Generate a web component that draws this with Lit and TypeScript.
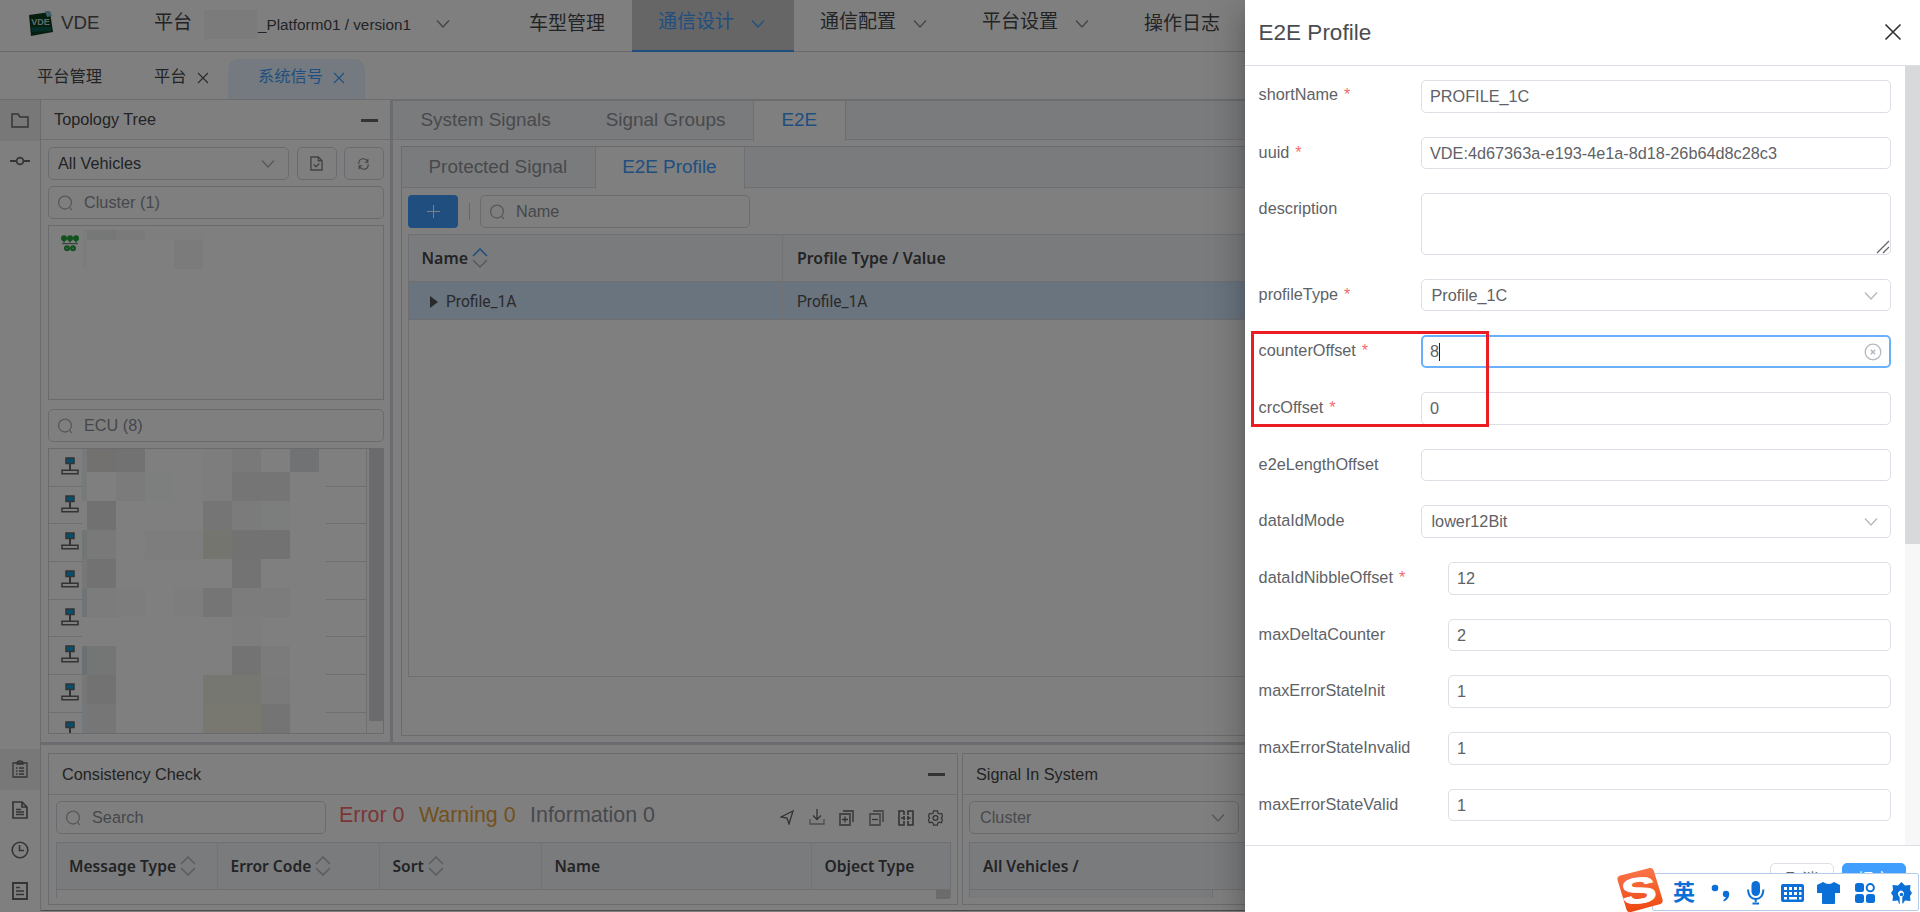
import { LitElement, html, svg, css, nothing } from "lit";
import { customElement } from "lit/decorators.js";
import { styleMap } from "lit/directives/style-map.js";

const icon = (body: unknown, w: number, h: number, vb = `0 0 ${w} ${h}`) =>
  html`<svg class="ic" width=${w} height=${h} viewBox=${vb} fill="none" stroke="currentColor" stroke-width="1.3">${body}</svg>`;

const chevron = () => icon(svg`<path d="M1 1.5 7 8 13 1.5"/>`, 14, 10);
const search = () => icon(svg`<circle cx="8" cy="7.6" r="6.4"/><path d="m12.6 12.4 2.4 2.800"/>`, 16, 17);
const cross = (s: number) => icon(svg`<path d="M1 1 11 11M11 1 1 11" stroke-width="1.100"/>`, s, s, "0 0 12 12");
const sorter = (up = false) => html`<svg class="ic sorter" width="16" height="20" viewBox="0 0 16 20" fill="none" stroke-width="1.6">
  <path class=${up ? "on" : "off"} d="M1 8 8 1l7 7"/><path class="off" d="m1 12 7 7 7-7"/></svg>`;
const minus = () => html`<span class="minus"></span>`;

const railTop = {
  folder: icon(svg`<path stroke-width="1.5" d="M1 1h6l2 3h8v10H1z"/>`, 18, 15),
  commit: icon(svg`<circle cx="10" cy="5" r="3.4" stroke-width="1.8"/><path stroke-width="1.8" d="M0 5h6.5M13.5 5H20"/>`, 20, 10),
};
const railBottom = [
  icon(svg`<path d="M1 3h14v14H1zM5 3c0-1 1-2 3-2s3 1 3 2v1H5zM4 8h1.5M7 8h5M4 11h1.500M7 11h5M4 14h1.500M7 14h5"/>`, 16, 18),
  icon(svg`<path stroke-width="1.7" d="M1 1h9l5 5v11H1zM10 1v5h5M4 8.500h5M4 11h8M4 13.500h8"/>`, 16, 18),
  icon(svg`<circle cx="9" cy="9" r="7.800" stroke-width="1.600"/><path stroke-width="1.600" d="M8.500 4v5.500H13"/>`, 18, 18),
  icon(svg`<path stroke-width="1.900" d="M1 1h14v16H1z"/><path stroke-width="1.500" d="M4 5.500h4M4 9h8M4 12.500h8"/>`, 16, 18),
];

const clusterIcon = html`<svg class="ic" width="18" height="17" viewBox="0 0 18 17">
  <g fill="#22a43c"><circle cx="3" cy="3.200" r="3"/><circle cx="9" cy="3.200" r="3"/><circle cx="15" cy="3.200" r="3"/>
  <path d="M2.200 5h1.600v2.500H2.200zM8.200 5h1.600v2.500H8.200zM14.200 5h1.600v2.500h-1.600z"/>
  <circle cx="6" cy="13.200" r="3"/><circle cx="12" cy="13.200" r="3"/></g>
  <path d="M1 8.700h16" stroke="#666" stroke-width="1"/><path d="M5 13.200h2M11 13.200h2" stroke="#bbe" stroke-width="1"/></svg>`;
const ecuIcon = html`<svg class="ic" width="18" height="18" viewBox="0 0 18 18" fill="none" stroke="#666" stroke-width="1.500">
  <path d="M5 1h8v5.500H5z" fill="#0a9fdc"/><path d="M9 7v6" stroke-width="2"/><path d="M1 13.200h16v3.600H1z"/></svg>`;

const toolIcons = [
  icon(svg`<path d="M1 7 13 1 9 14 7 8z"/>`, 14, 15),
  icon(svg`<path stroke="#999" d="M1 10v5h14v-5"/><path d="M8 0v10M4 6.500l4 4 4-4"/>`, 16, 17),
  icon(svg`<path stroke="#888" stroke-width="1.800" d="M1 4h10v11H1zM4 1h10v11"/><path d="M3 9.500h6M6 6.500v6"/>`, 15, 16),
  icon(svg`<path stroke="#999" stroke-width="1.800" d="M1 4h10v11H1zM4 1h10v11"/><path d="M3 9.500h6"/>`, 15, 16),
  icon(svg`<path stroke-width="1.600" d="M6 1H1v14h5v-4M6 5V1M10 5V1h5v14h-5v-4M3 8h4M9 8h4M6 6v4M10 6v4"/>`, 16, 16),
  icon(svg`<path d="M6 1h4l.6 2.200 1.700 1 2.200-.6 1 3.200-1.400 1.700 1.400 2-1.200 3-2.200-.500-1.700 1L10 16H6l-.6-2-1.700-1-2.200.5-1.200-3 1.400-2L.500 6.800l1-3.200 2.200.6 1.700-1z"/><circle cx="8" cy="8.500" r="2.600"/>`, 15, 16, "0 0 16 17"),
];

interface Cell { x: number; y: number; w: number; h: number; c: string }
const m = (x: number, y: number, w: number, h: number, c: string): Cell => ({ x, y, w, h, c });
const clusterBlur = [
  m(0, 0, 4, 39, "#f6f8f8"), m(4, 0, 29, 10, "#ecefee"), m(33, 0, 29, 10, "#f4f5f4"),
  m(62, 0, 58, 10, "#fafcfb"), m(91, 10, 29, 29, "#f6f6f6"),
];
const ecuBlur = [
  m(0, 0, 5, 23, "#eff5f5"), m(5, 0, 58, 23, "#e4e3df"), m(34, 0, 29, 23, "#e4e4e4"), m(121, 0, 29, 23, "#fafafa"),
  m(150, 0, 29, 23, "#f3f3f3"), m(208, 0, 29, 23, "#e2e4e8"),
  m(0, 23, 5, 29, "#eef5f4"), m(34, 23, 29, 29, "#f4f7f5"), m(63, 23, 29, 29, "#fafdfc"), m(121, 23, 29, 29, "#fafafa"), m(150, 23, 58, 29, "#ebebeb"),
  m(5, 52, 29, 29, "#e0e3e1"), m(121, 52, 29, 29, "#ebebeb"), m(150, 52, 29, 29, "#f7f7f7"), m(179, 52, 29, 29, "#f8fbfa"),
  m(0, 81, 5, 29, "#e5eaed"), m(5, 81, 29, 29, "#f3f3f3"), m(63, 81, 58, 29, "#fbfbfb"), m(121, 81, 29, 29, "#ebebdf"), m(150, 81, 58, 29, "#e4e4e4"),
  m(0, 110, 5, 29, "#eeeeee"), m(5, 110, 29, 29, "#e4e4e4"), m(150, 110, 29, 29, "#e6e6e6"),
  m(0, 139, 5, 29, "#dfe8ec"), m(5, 139, 29, 29, "#f8f8f8"), m(34, 139, 29, 29, "#fbfbfb"), m(92, 139, 29, 29, "#fafafa"), m(121, 139, 29, 29, "#ebebeb"), m(150, 139, 58, 29, "#f9f9f9"),
  m(150, 168, 29, 29, "#fafafa"),
  m(0, 197, 5, 29, "#d4e0e6"), m(5, 197, 29, 29, "#e9edeb"), m(150, 197, 29, 29, "#e6e6e6"), m(179, 197, 29, 29, "#f7f7f7"),
  m(0, 226, 5, 29, "#eeeeee"), m(5, 226, 29, 29, "#e5e5e5"), m(121, 226, 58, 29, "#eeeee2"), m(179, 226, 29, 29, "#f4f4f4"),
  m(0, 255, 5, 29, "#e8f1f4"), m(5, 255, 29, 29, "#ececec"), m(121, 255, 58, 29, "#f0f0e3"), m(179, 255, 29, 29, "#e8e8e8"),
  m(5, 284, 29, 6, "#f5f7f6"), m(34, 284, 116, 6, "#fafcfb"), m(150, 284, 29, 6, "#f3f5f4"), m(208, 284, 35, 6, "#f9f9f9"),
];
const mosaic = (cells: Cell[]) => cells.map((k) => html`<i class="cell" style=${styleMap({
  left: `${k.x}px`, top: `${k.y}px`, width: `${k.w}px`, height: `${k.h}px`, background: k.c })}></i>`);

type Kind = "text" | "area" | "select" | "focus";
const fields: [string, boolean, Kind, string, boolean][] = [
  ["shortName", true, "text", "PROFILE_1C", false],
  ["uuid", true, "text", "VDE:4d67363a-e193-4e1a-8d18-26b64d8c28c3", false],
  ["description", false, "area", "", false],
  ["profileType", true, "select", "Profile_1C", false],
  ["counterOffset", true, "focus", "8", false],
  ["crcOffset", true, "text", "0", false],
  ["e2eLengthOffset", false, "text", "", false],
  ["dataIdMode", false, "select", "lower12Bit", false],
  ["dataIdNibbleOffset", true, "text", "12", true],
  ["maxDeltaCounter", false, "text", "2", true],
  ["maxErrorStateInit", false, "text", "1", true],
  ["maxErrorStateInvalid", false, "text", "1", true],
  ["maxErrorStateValid", false, "text", "1", true],
];

const base = css`
  * { box-sizing: border-box; }
  .ic { display: block; flex: none; }
`;

@customElement("profile-drawer")
export class ProfileDrawer extends LitElement {
  static styles = [base, css`
    :host { display: flex; flex-direction: column; background: #fff; color: #606266; font-size: 16.25px;
      box-shadow: 0 10px 12px -6px rgba(0,0,0,.2), 0 20px 30px 2px rgba(0,0,0,.14), 0 7px 36px 6px rgba(0,0,0,.12); }
    header { height: 66px; flex: none; border-bottom: 1px solid #dcdfe6; display: flex; align-items: center;
      justify-content: space-between; padding: 0 18px 0 13.600px; font-size: 22.500px; color: #4a4c50; }
    header .ic { color: #333; margin-top: -1px; }
    .body { height: 779px; flex: none; display: flex; }
    form { flex: 1; padding: 14px 14px 0 13.600px; overflow: hidden; }
    .track { width: 15px; background: #f7f7f7; }
    .thumb { height: 478px; background: #d8d9db; }
    .row { display: flex; height: 32.5px; margin-bottom: 24.17px; }
    .row.tall { height: 61.500px; margin-bottom: 24px; }
    label { width: 162.400px; flex: none; line-height: 30px; white-space: nowrap; }
    .row:first-child label { line-height: 29px; }
    .row.wide label { width: 189.400px; }
    label b { color: #f56c6c; font-weight: 400; margin-left: 6px; }
    .input { flex: 1; border: 1.25px solid #dcdfe6; border-radius: 5px; display: flex; align-items: center;
      padding: 1px 12px 0 8px; position: relative; }
    .input.select { justify-content: space-between; padding-left: 9.500px; }
    .input.select .ic { color: #b4b8bf; }
    .input.focus { border: 2px solid #69b1fb; padding: 1px 10px 0 7px; }
    .caret { width: 1px; height: 18px; background: #222; }
    .clear { margin-left: auto; color: #b4b8bf; margin-right: -3px; }
    .grip { position: absolute; right: 0; bottom: 0; color: #666; }
    footer { border-top: 1px solid #dcdfe6; flex: 1; display: flex; justify-content: flex-end; gap: 8px; padding: 17px 14px 0; }
    .btn { height: 34px; width: 64px; border: 1.25px solid #dcdfe6; border-radius: 5px; text-align: center; line-height: 31px; }
    .btn.primary { background: #409eff; border-color: #409eff; color: #fff; }
  `];
  private field([name, req, kind, value, wide]: (typeof fields)[number]) {
    return html`<div class="row ${kind === "area" ? "tall" : ""} ${wide ? "wide" : ""}">
      <label>${name}${req ? html`<b>*</b>` : nothing}</label>
      <div class="input ${kind}"><span>${value}</span>
        ${kind === "select" ? chevron() : nothing}
        ${kind === "focus" ? html`<span class="caret"></span><span class="clear">${icon(svg`<circle cx="9" cy="9" r="7.800"/><path stroke-width="1.500" d="m6.800 6.800 4.400 4.400m0-4.400-4.400 4.400"/>`, 18, 18)}</span>` : nothing}
        ${kind === "area" ? html`<span class="grip">${icon(svg`<path d="M1 13 13 1M7 13l6-6"/>`, 14, 14)}</span>` : nothing}
      </div></div>`;
  }
  render() {
    return html`<header><span>E2E Profile</span>${cross(18)}</header>
      <div class="body"><form>${fields.map((f) => this.field(f))}</form><div class="track"><div class="thumb"></div></div></div>
      <footer><div class="btn">取消</div><div class="btn primary">提交</div></footer>`;
  }
}

@customElement("ime-bar")
export class ImeBar extends LitElement {
  static styles = [base, css`
    :host { display: flex; align-items: center; background: #fff; border: 1.500px solid #b4cdea; border-radius: 2px; color: #0a6fd6; padding-left: 13px; }
    .slot { width: 36.200px; flex: none; display: flex; justify-content: center; }
    .en { font-size: 22px; font-weight: 700; line-height: 36px; }
    .badge { position: absolute; left: -38px; top: -8px; }
    .items { display: flex; align-items: center; height: 37px; padding-top: 1px; }
    .s { font: 700 44px "Liberation Sans", sans-serif; }
  `];
  render() {
    const f = (b: unknown, w: number, h: number) => html`<span class="slot"><svg class="ic" width=${w} height=${h} viewBox="0 0 ${w} ${h}" fill="currentColor">${b}</svg></span>`;
    return html`<svg class="badge" width="50" height="46" viewBox="0 0 50 47">
        <defs><linearGradient id="g" x1="0" y1="0" x2="0" y2="1"><stop offset="0" stop-color="#f9764a"/><stop offset="1" stop-color="#ee4710"/></linearGradient></defs>
        <path d="M4 10 35 2q3-.5 4 2.500L48 34q1 4-3 5L16 47q-4 1-5-3L2 14q-.5-3 2-4z" fill="url(#g)"/>
        <text class="s" x="0" y="0" text-anchor="middle" fill="#fff" stroke="#fff" stroke-width="1" transform="translate(25.500 37.500) rotate(-8) scale(1.220 .84)">S</text></svg>
      <div class="items">
        <span class="slot en">英</span>
        ${f(svg`<circle cx="5" cy="5" r="3.300"/><circle cx="16" cy="11" r="3.200"/><path d="M19.200 11q.3 5-5.200 7.500l-.8-1.200q3-2 3-4z"/>`, 20, 19)}
        ${f(svg`<rect x="4.500" y="0" width="8.500" height="15" rx="4.200"/><path d="M1 8.500q.5 9.500 7.700 9.500T16.500 8.500" fill="none" stroke="currentColor" stroke-width="2"/><path d="M7.700 18h2v3h-2zM5.500 21.500h6.500v2H5.500z"/>`, 18, 24)}
        ${f(svg`<path fill-rule="evenodd" d="M2 0h19q2 0 2 2v14q0 2-2 2H2q-2 0-2-2V2q0-2 2-2zM3 3v3h3V3zM8 3v3h3V3zM13 3v3h3V3zM18 3v3h2.500V3zM3 8v3h3V8zM8 8v3h3V8zM13 8v3h3V8zM18 8v3h2.500V8zM3 13v2.500h3V13zM8 13v2.500h8V13zM18 13v2.500h2.500V13z"/>`, 23, 18)}
        ${f(svg`<path d="M6 0q6 4 11 0l6 3v8h-5v10q0 1-1 1H6q-1 0-1-1V11H0V3z"/>`, 23, 22)}
        ${f(svg`<rect width="9" height="9" rx="2.500"/><circle cx="15.300" cy="4.700" r="3.600" fill="none" stroke="currentColor" stroke-width="2"/><rect y="11" width="9" height="9" rx="2.500"/><rect x="11" y="11" width="9" height="9" rx="2.500"/>`, 20, 20)}
        ${f(svg`<path d="M7 3.500 10.500 0 14 3.500l5.500-.5-.5 5 2 3-2 3 .5 5-5.500-.5-2 3h-.7v-6.500q3.500-3 .2-6-1.500-1-3 0-3.300 3 .2 6V22h-.7L7 18.500 1.500 19l.5-5-2-3 2-3-.5-5z"/><circle cx="10.500" cy="12.500" r="1.800"/>`, 21, 22)}
      </div>`;
  }
}

@customElement("app-root")
export class AppRoot extends LitElement {
  static styles = [base, css`
    :host { display: block; position: relative; width: 1920px; height: 912px; overflow: hidden; background: #fff; color: #45474b;
      font: 16.25px/1.2 "Liberation Sans", "Noto Sans CJK SC", sans-serif; white-space: nowrap; }
    .top { height: 52px; border-bottom: 1.250px solid #d0d2d6; display: flex; align-items: center; padding-left: 28px; font-size: 19px; }
    .brand { display: flex; align-items: center; gap: 7px; width: 126px; padding-bottom: 4px; }
    .logo { font: 700 9px "Liberation Sans", sans-serif; }
    .brand span { font-size: 18.700px; color: #555; }
    .plat { padding-bottom: 4px; width: 50px; }
    .mask { width: 53px; height: 29px; background: #f6f6f6; margin-bottom: 3px; }
    .ver { font-size: 15.300px; width: 179px; margin-top: -1px; padding-left: 1px; }
    .top .ic { color: #888; }
    .top > .ic { margin-top: -3px; }
    .nav { display: flex; height: 52px; margin-left: 52.500px; }
    .nav div { display: flex; padding: 0 26.500px 3px; align-items: center; }
    .nav .sub { width: 162px; justify-content: space-between; padding-right: 29px; padding-bottom: 6px; }
    .nav .sub .ic { margin-top: 2px; }
    .nav .act { background: #ccc; color: #409eff; border-bottom: 2px solid #409eff; padding-bottom: 4px; }
    .nav .act .ic { color: #409eff; }
    .tabs { height: 47px; display: flex; align-items: flex-end; }
    .tabs div { height: 40px; display: flex; align-items: center; padding-bottom: 4px; }
    .tabs .ic { color: #555; margin-top: 2px; }
    .tabs .t1 { padding-left: 37px; width: 154px; }
    .tabs .t2 { width: 74px; gap: 10px; }
    .tabs .t3 { width: 137px; padding-left: 30px; gap: 10px; background: #e8f4ff; color: #409eff; border-radius: 10px 10px 0 0; }
    .tabs .t3 .ic { color: #409eff; }
    .main { display: grid; grid-template-columns: 41px 1fr; height: 812px; border-top: 1.250px solid #d8dade; }
    .rail { border-right: 1.250px solid #d4d6da; display: flex; flex-direction: column; }
    .rail div { height: 40.500px; display: grid; place-items: center; color: #6a6a6a; }
    .rail .on { background: #f0f0f0; }
    .rail .gap { flex: 1; }
    .work { display: flex; flex-direction: column; min-width: 0; }
    .upper { display: flex; height: 642px; }
    .left { width: 349px; display: flex; flex-direction: column; }
    .vbar { width: 3px; background: #d5d8df; }
    .hbar { height: 3px; background: #d5d8df; }
    .ptitle { height: 40px; flex: none; border-bottom: 1.250px solid #dcdfe6; display: flex; align-items: center; justify-content: space-between; padding: 1px 12px 0 13px; }
    .minus { width: 17px; height: 3px; background: #666; }
    .lbody { padding: 7px 6px 0 7px; display: flex; flex-direction: column; }
    .line { display: flex; gap: 7.500px; }
    .box { border: 1.250px solid #d4d7de; border-radius: 5px; height: 33px; display: flex; align-items: center; padding: 0 13px 0 9px; }
    .box.sel { justify-content: space-between; }
    .box .ic { color: #b0b0b0; }
    .box.ibtn { width: 40px; padding: 0 1px 0 0; justify-content: center; }
    .box.ibtn .ic { color: #888; }
    .box.find { color: #8c8f94; gap: 11px; padding-top: 1px; padding-left: 8px; }
    .lbody .sel { width: 241px; }
    .cfind { margin-top: 6px; }
    .tree { position: relative; border: 1.250px solid #d4d7de; height: 175px; margin-top: 6px; padding: 9px 12px; }
    .efind { margin-top: 9px; }
    .ecus { position: relative; border: 1.250px solid #d4d7de; height: 286px; margin-top: 6px; display: flex; overflow: hidden; }
    .elist { flex: 1; border-right: 1.250px solid #dcdfe6; }
    .elist div { height: 37.700px; border-bottom: 1.250px solid #dcdfe6; padding: 8px 12px; }
    .escroll { width: 16px; padding-left: 2px; }
    .escroll i { display: block; height: 272px; background: #d6d7da; }
    .cell { position: absolute; }
    .right { flex: 1; min-width: 0; }
    .rtabs { display: flex; height: 40px; background: #f5f7fa; font-size: 18.900px; color: #909399; border-bottom: 1.250px solid #dcdfe6; border-top: 1px solid #d5d8df; }
    .rtabs div { padding: 7.500px 27.500px 0; }
    .rtabs .cur { background: #fff; color: #409eff; border: solid #dcdfe6; border-width: 0 1.250px; margin-bottom: -2px; }
    .card { margin: 6px 0 0 8px; height: 590px; border: 1.250px solid #d4d7de; }
    .card .rtabs { height: 41px; border-top: 0; }
    .card .rtabs div { padding: 9px 27.500px 0 26.500px; }
    .tool { display: flex; align-items: center; padding: 7px 6px 6px; }
    .add { width: 50px; height: 33px; border-radius: 4px; background: #409eff; color: #fff; display: grid; place-items: center; }
    .sep { width: 1px; height: 17px; background: #ccc; margin: 0 10px 0 11px; }
    .tool .find { width: 270px; }
    .grid { margin-left: 6px; height: 443px; border: 1.250px solid #dcdfe6; }
    .tr { display: grid; grid-template-columns: 374px 1fr; }
    .tr div { display: flex; align-items: center; padding-left: 12.500px; border-right: 1.250px solid #e4e7ed; border-bottom: 1.250px solid #dcdfe6; }
    .tr div:last-child { padding-left: 14px; }
    .th { background: #f5f7fa; font: 600 15.600px "Noto Sans", sans-serif; color: #46484c; }
    .th.h1 { height: 47px; font-size: 15.900px; }
    .tr.pick { height: 38px; background: #d3e8ff; font: 15.600px "Roboto", sans-serif; color: #555; }
    .tr.pick div { padding-top: 2px; }
    .tr.pick .first { padding-left: 21px; gap: 8px; }
    .tri { border: solid transparent; border-width: 6px 0 6px 8px; border-left-color: #555; }
    .sorter { margin-left: 4px; }
    .sorter .off { stroke: #b6b9c0; }
    .sorter .on { stroke: #409eff; }
    .lower { display: flex; padding: 8px 0 0 7px; gap: 4px; height: 161px; }
    .pane { border: 1.250px solid #d4d7de; height: 152px; width: 910px; }
    .pane.sig { width: 900px; }
    .pane .ptitle { height: 41px; }
    .pane.sig .ptitle { padding-left: 13px; }
    .prow { display: flex; align-items: center; padding: 6px 17px 0 7px; height: 39px; }
    .prow .find { width: 270px; padding-left: 8px; }
    .counts { font-size: 21.400px; display: flex; gap: 14.500px; margin: -4px auto 0 13px; }
    .err { color: #f56c6c; } .warn { color: #e6a23c; } .info { color: #909399; }
    .icons { display: flex; margin-right: -10px; }
    .icons span { width: 29.600px; display: grid; place-items: center; color: #666; }
    .mt { margin: 8px 6px 0 7px; border: 1.250px solid #dcdfe6; border-bottom: 0; height: 56px; }
    .mh { display: grid; height: 47px; grid-template-columns: 160.500px 162px 162px 270px 1fr; border-bottom: 1.250px solid #dcdfe6; }
    .mh div { display: flex; align-items: center; padding-left: 13px; border-right: 1.250px solid #e4e7ed; }
    .mh div:first-child { padding-left: 12px; }
    .mh div:last-child { border: 0; }
    .stub { width: 14px; height: 9px; background: #d6d7d9; margin-left: auto; }
    .sig .box { width: 270px; color: #909399; padding-left: 10px; }
    .sig .prow { padding-left: 6px; }
    .sig .mt { margin-left: 6px; }
    .sig .mh { grid-template-columns: 1fr; }
    .sig .mh div:first-child { padding-left: 13px; }
    .sig .foot { height: 8px; background: #f5f7fa; width: 243px; border-right: 1px solid #dcdfe6; }
    .baseline { height: 1px; background: #999; margin-top: auto; }
    .shade { position: absolute; inset: 0; background: rgba(0,0,0,.5); }
    profile-drawer { position: absolute; left: 1245px; top: 0; width: 675px; height: 912px; }
    .mark { position: absolute; left: 1251px; top: 331px; width: 238px; height: 96px; border: 3px solid #ec1c24; }
    ime-bar { position: absolute; left: 1652px; top: 873px; width: 267px; height: 38px; }
  `];
  render() {
    return html`
      <div class="top">
        <div class="brand"><svg class="ic logo" width="26" height="26" viewBox="0 0 26 26">
          <path d="M1 4 22 1l3 20L3 25z" fill="#0b3d1c"/><path d="M17 0h5l2 5-5 1z" fill="#7fb6c9"/><path d="M3 16h20v4L4 21z" fill="#0a5a50"/>
          <text x="12.500" y="14" text-anchor="middle" fill="#b9dcd6">VDE</text></svg><span>VDE</span></div>
        <div class="plat">平台</div><div class="mask"></div><div class="ver">_Platform01 / version1</div>${chevron()}
        <div class="nav"><div>车型管理</div>
          <div class="sub act">通信设计${chevron()}</div><div class="sub">通信配置${chevron()}</div><div class="sub">平台设置${chevron()}</div><div>操作日志</div></div>
      </div>
      <div class="tabs"><div class="t1">平台管理</div><div class="t2">平台${cross(12)}</div><div class="t3">系统信号${cross(12)}</div></div>
      <div class="main">
        <div class="rail"><div class="on">${railTop.folder}</div><div>${railTop.commit}</div><span class="gap"></span>
          ${railBottom.map((i, n) => html`<div class=${n ? "" : "on"}>${i}</div>`)}</div>
        <div class="work">
          <div class="upper">
            <div class="left">
              <div class="ptitle">Topology Tree${minus()}</div>
              <div class="lbody">
                <div class="line"><div class="box sel">All Vehicles${chevron()}</div>
                  <div class="box ibtn">${icon(svg`<path stroke-width="1.500" d="M1 1h8l4 4v10H1zM9 1v4h4M4 9l2.500 2.500L10 8"/>`, 13, 15, "0 0 14 16")}</div>
                  <div class="box ibtn">${icon(svg`<path d="M2 8q0-6 5-6 4 0 5.500 4M12.500 2v4H9M13 8q0 6-5 6-4 0-5.500-4M2.500 14v-4H6"/>`, 13, 14, "0 0 15 16")}</div></div>
                <div class="box find cfind">${search()}Cluster (1)</div>
                <div class="tree">${clusterIcon}${mosaic(clusterBlur.map((k) => ({ ...k, x: k.x + 34, y: k.y + 4 })))}</div>
                <div class="box find efind">${search()}ECU (8)</div>
                <div class="ecus"><div class="elist">${Array.from({ length: 8 }, () => html`<div>${ecuIcon}</div>`)}</div>
                  <div class="escroll"><i></i></div>
                  ${mosaic([m(33, 0, 244, 290, "#fefefe"), ...ecuBlur.map((k) => ({ ...k, x: k.x + 33 }))])}</div>
              </div>
            </div>
            <div class="vbar"></div>
            <div class="right">
              <div class="rtabs"><div>System Signals</div><div>Signal Groups</div><div class="cur">E2E</div></div>
              <div class="card">
                <div class="rtabs"><div>Protected Signal</div><div class="cur">E2E Profile</div></div>
                <div class="tool"><div class="add">${icon(svg`<path d="M6.500 0v13M0 6.500h13" stroke-width="1"/>`, 13, 13)}</div><i class="sep"></i><div class="box find">${search()}Name</div></div>
                <div class="grid">
                  <div class="tr th h1"><div>Name${sorter(true)}</div><div>Profile Type / Value</div></div>
                  <div class="tr pick"><div class="first"><i class="tri"></i>Profile_1A</div><div>Profile_1A</div></div>
                </div>
              </div>
            </div>
          </div>
          <div class="hbar"></div>
          <div class="lower">
            <div class="pane"><div class="ptitle">Consistency Check${minus()}</div>
              <div class="prow"><div class="box find">${search()}Search</div>
                <div class="counts"><span class="err">Error 0</span><span class="warn">Warning 0</span><span class="info">Information 0</span></div>
                <div class="icons">${toolIcons.map((i) => html`<span>${i}</span>`)}</div></div>
              <div class="mt"><div class="mh th"><div>Message Type${sorter()}</div><div>Error Code${sorter()}</div><div>Sort${sorter()}</div><div>Name</div><div>Object Type</div></div><div class="stub"></div></div>
            </div>
            <div class="pane sig"><div class="ptitle">Signal In System</div>
              <div class="prow"><div class="box sel">Cluster${chevron()}</div></div>
              <div class="mt"><div class="mh th"><div>All Vehicles /</div></div><div class="foot"></div></div>
            </div>
          </div>
          <div class="baseline"></div>
        </div>
      </div>
      <div class="shade"></div>
      <profile-drawer></profile-drawer>
      <div class="mark"></div>
      <ime-bar></ime-bar>`;
  }
}
